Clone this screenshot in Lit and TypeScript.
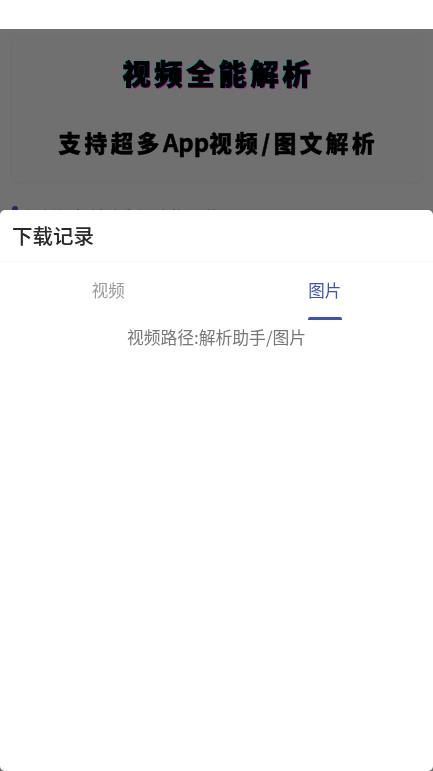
import { LitElement, html, css } from "lit";
import { customElement } from "lit/decorators.js";

@customElement("app-root")
export class AppRoot extends LitElement {
  static styles = css`
    :host {
      display: block;
      position: relative;
      width: 433px;
      height: 771px;
      overflow: hidden;
      background: #717171;
      font-family: "Noto Sans CJK SC", "Noto Sans", sans-serif;
    }
    .status { height: 29px; background: #fff; }
    .page {
      height: 742px;
      background: #717171;
      padding: 9px 10px 0;
      box-sizing: border-box;
      display: flex;
      flex-direction: column;
    }
    .card {
      height: 146px;
      box-sizing: border-box;
      border-radius: 8px;
      background: #707070;
      border: 1px solid #6d6d6d;
      display: flex;
      flex-direction: column;
      align-items: center;
      color: #000;
    }
    .title {
      margin-top: 14px;
      font-size: 28px;
      line-height: 40px;
      font-weight: 900;
      letter-spacing: 4px;
      margin-right: -4px;
      -webkit-text-stroke: 1px #000;
      text-shadow: -1px -1px 0.5px #0a9a9a, 1px 1px 0.5px #9a0a9a;
      filter: blur(0.4px);
    }
    .sub {
      margin-top: 32px;
      font-size: 22.5px;
      line-height: 34px;
      font-weight: 900;
      letter-spacing: 3.6px;
      margin-right: -3.6px;
      -webkit-text-stroke: 0.5px #000;
      filter: blur(0.6px);
    }
    .latin { letter-spacing: 0; font-size: 24px; font-weight: 700; }
    .note {
      margin-top: 21px;
      padding-left: 2px;
      display: flex;
      align-items: flex-start;
      gap: 7px;
      font-size: 16px;
      line-height: 22px;
      color: #333;
    }
    .dot {
      width: 6px;
      height: 6px;
      margin-top: 1px;
      border-radius: 50%;
      background: #1f2a6e;
    }
    .sheet {
      position: absolute;
      left: 0;
      right: 0;
      top: 210px;
      bottom: 0;
      background: #fff;
      border-radius: 5px;
      display: flex;
      flex-direction: column;
      will-change: transform;
    }
    .head {
      height: 52px;
      box-sizing: border-box;
      padding: 0 0 2px 12px;
      display: flex;
      align-items: center;
      font-size: 20.5px;
      line-height: 30px;
      font-weight: 500;
      color: #2a2a2a;
      border-bottom: 1px solid #f7f7f7;
    }
    .tabs { display: grid; grid-template-columns: 1fr 1fr; height: 58px; }
    .tab {
      position: relative;
      display: flex;
      justify-content: center;
      padding-top: 16px;
      font-size: 16.5px;
      line-height: 24px;
      font-weight: 400;
      color: #999;
    }
    .tab.on { color: #3f51b5; }
    .tab.on::after {
      content: "";
      position: absolute;
      bottom: 0;
      left: 50%;
      width: 34px;
      margin-left: -17px;
      height: 3px;
      background: #3f51b5;
      border-radius: 2px 2px 0 0;
    }
    .path {
      margin-top: 5px;
      text-align: center;
      font-size: 16.8px;
      line-height: 24px;
      font-weight: 400;
      color: #777;
    }
  `;

  render() {
    return html`
      <div class="status"></div>
      <div class="page">
        <div class="card">
          <div class="title">视频全能解析</div>
          <div class="sub">支持超多<span class="latin">App</span>视频/图文解析</div>
        </div>
        <div class="note"><span class="dot"></span><span>解析视频前请先阅读使用说明</span></div>
      </div>
      <div class="sheet">
        <div class="head">下载记录</div>
        <div class="tabs">
          <div class="tab">视频</div>
          <div class="tab on">图片</div>
        </div>
        <div class="path">视频路径:解析助手/图片</div>
      </div>
    `;
  }
}
